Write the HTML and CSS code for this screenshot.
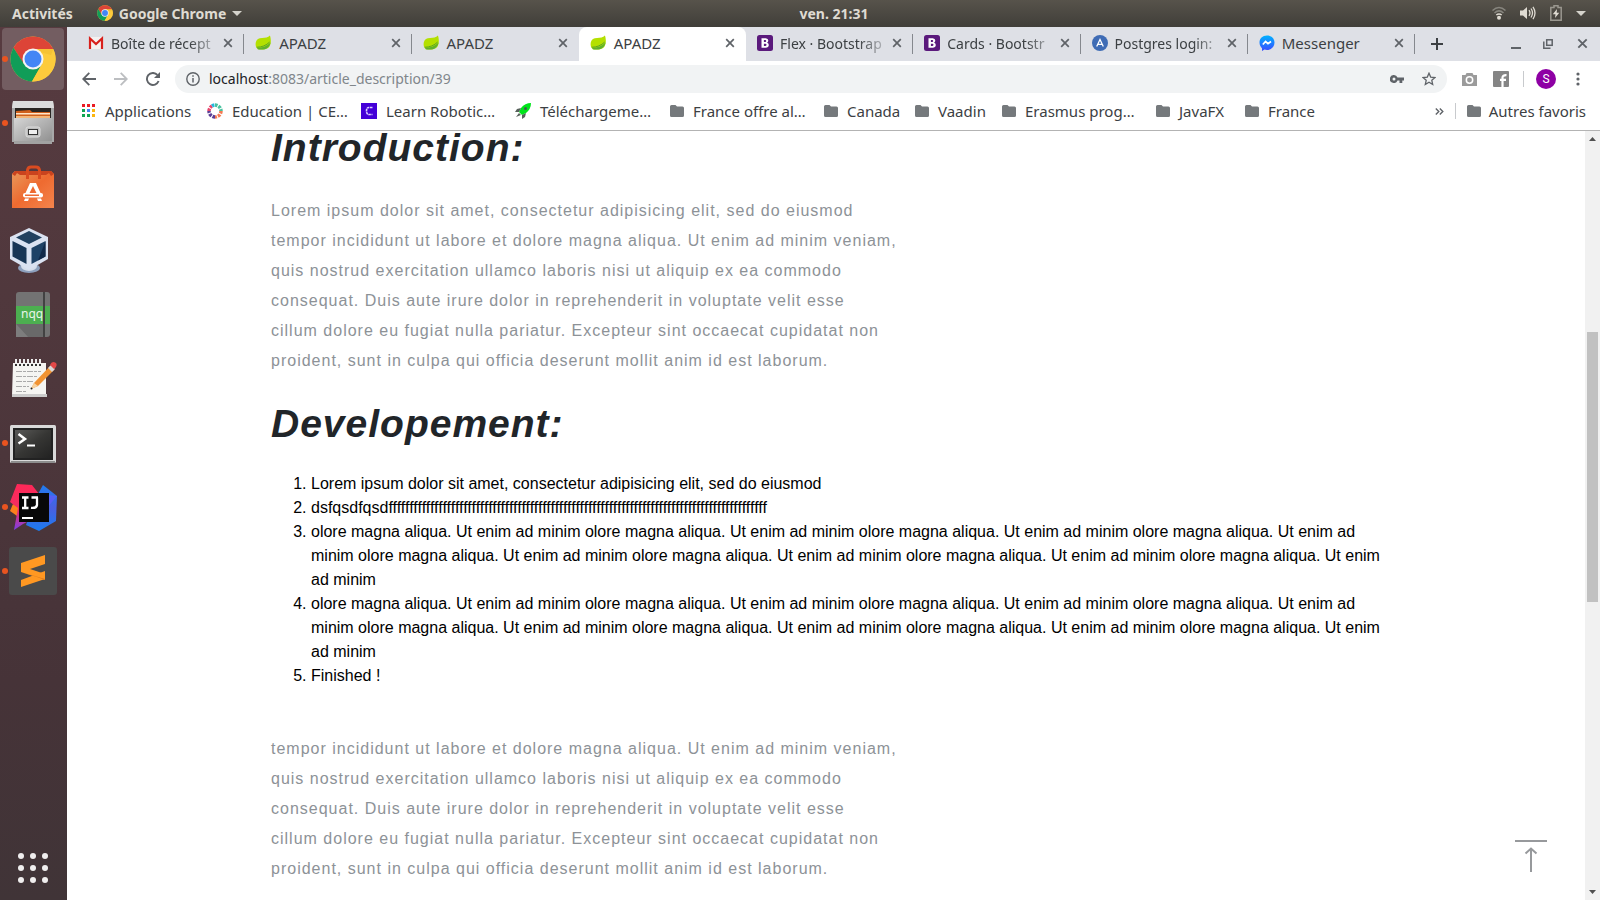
FILE: index.html
```html
<!DOCTYPE html>
<html lang="fr">
<head>
<meta charset="utf-8">
<title>APADZ</title>
<link rel="stylesheet" href="styles.css">
</head>
<body>
<svg class="defs" aria-hidden="true">
  <defs>
    <linearGradient id="ijp" x1="0" y1="0" x2="0" y2="1"><stop offset="0" stop-color="#fe2857"/><stop offset=".55" stop-color="#f22e62"/><stop offset="1" stop-color="#7a3fe8"/></linearGradient>
    <linearGradient id="ijb" x1="0" y1="0" x2="0" y2="1"><stop offset="0" stop-color="#1f7df0"/><stop offset=".5" stop-color="#4a5fe0"/><stop offset="1" stop-color="#1a7cf0"/></linearGradient>
    <linearGradient id="metal" x1="0" y1="0" x2="1" y2="1"><stop offset="0" stop-color="#d6d6d6"/><stop offset="1" stop-color="#8c8c8c"/></linearGradient>
    <linearGradient id="bag" x1="0" y1="0" x2="1" y2="1"><stop offset="0" stop-color="#e99a5c"/><stop offset=".5" stop-color="#ee6a30"/><stop offset="1" stop-color="#f4854d"/></linearGradient>
    <linearGradient id="term" x1="0" y1="0" x2="1" y2="1"><stop offset="0" stop-color="#5a5a58"/><stop offset=".5" stop-color="#363634"/><stop offset="1" stop-color="#222"/></linearGradient>
    <linearGradient id="msg" x1="0" y1="0" x2="0" y2="1"><stop offset="0" stop-color="#00b2ff"/><stop offset="1" stop-color="#3a4bff"/></linearGradient>
  </defs>
  <symbol id="chrome" viewBox="0 0 46 46">
    <circle cx="23" cy="23" r="22.500" fill="#fdcb3c"/>
    <path d="M3.500 11.800A22.500 22.500 0 0 1 42.500 11.800L43.300 13H23L13 27Z" fill="#dd4437"/>
    <path d="M3.500 11.800A22.500 22.500 0 0 0 22 45.500L32 28 23 30 14 28Z" fill="#109d58"/>
    <path d="M32 28L22 45.500A22.500 22.500 0 0 0 43.300 13H23Z" fill="#fdcb3c"/>
    <path d="M23 13H43.300L41 19 30 16Z" fill="#e8b226" opacity=".35"/>
    <circle cx="23" cy="23" r="10.500" fill="#f4f4f4"/><circle cx="23" cy="23" r="8.500" fill="#4386f5"/>
  </symbol>
  <symbol id="leaf" viewBox="0 0 18 18">
    <path d="M15.800 1C17.300 5.500 17.200 10.500 14.800 13.500 12.500 16 7 16.300 3 15.500 .8 14 .3 11 .8 8.500 1.500 5 4 3.700 7.500 3.600 11 3.500 13.800 3 15.800 1Z" fill="#b4e000"/>
    <path d="M2.500 14.300C8 14.300 13 12.200 16.500 8.500 15.800 12 13.800 14.800 10.500 15.500 7.500 16 4.500 15.900 3 15.500Z" fill="#5fb030"/>
    <path d="M1.800 13.500C7 13.600 12 11.500 15.500 8" fill="none" stroke="#4c9a2a" stroke-width=".9"/>
  </symbol>
  <symbol id="close" viewBox="0 0 10 10"><path d="M1.200 1.200l7.600 7.600M8.800 1.200L1.200 8.800" stroke="#5f6368" stroke-width="1.700"/></symbol>
  <symbol id="folder" viewBox="0 0 14 12"><path d="M1.500 0H5.500L7 1.500H12.500Q14 1.500 14 3V10.500Q14 12 12.500 12H1.500Q0 12 0 10.500V1.500Q0 0 1.500 0Z" fill="#75797c"/></symbol>
  <symbol id="boot" viewBox="0 0 16 16"><rect width="16" height="16" rx="2.500" fill="#5b1a7c"/><path d="M4.500 3.200H8.700Q11.300 3.400 11.300 5.600 11.300 7.100 10.100 7.700 11.800 8.200 11.800 10 11.600 12.700 8.700 12.800H4.500ZM6.900 5V7H8.300Q9.200 6.900 9.200 6 9.200 5.100 8.300 5ZM6.900 8.700V11H8.500Q9.500 10.900 9.500 9.800 9.400 8.800 8.500 8.700Z" fill="#fff" fill-rule="evenodd"/></symbol>
</svg>

<header class="panel">
  <div class="panel-left">
    <button class="panel-btn">Activités</button>
    <button class="panel-btn"><svg width="16" height="16"><use href="#chrome"/></svg>Google Chrome<svg class="caret" width="10" height="5" viewBox="0 0 10 5"><path d="M0 0H10L5 5Z" fill="#d5d3cc"/></svg></button>
  </div>
  <time class="clock">ven. 21:31</time>
  <div class="panel-right">
    <svg width="14" height="14" viewBox="0 0 14 14" fill="none"><path d="M.5 4.500Q7-1.500 13.500 4.500M2.500 7Q7 2.800 11.500 7" stroke="#87857e" stroke-width="1.500"/><path d="M4.300 9Q7 6.800 9.700 9" stroke="#dfdbd2" stroke-width="1.500"/><circle cx="7" cy="11.800" r="2" fill="#dfdbd2"/></svg>
    <svg width="16" height="14" viewBox="0 0 16 14" fill="none"><path d="M0 4.500H3L7 1V13L3 9.500H0Z" fill="#dfdbd2"/><path d="M9 4.200Q11 7 9 9.800M11 2.500Q14 7 11 11.500M13 .8Q17 7 13 13.200" stroke="#dfdbd2" stroke-width="1.300"/></svg>
    <svg width="12" height="16" viewBox="0 0 12 16" fill="none"><path d="M4 .8H8V2.500H11.200V15.200H.8V2.500H4Z" stroke="#9a978f" stroke-width="1.500"/><path d="M7 4L2.800 9.200H5.500L5 13 9.300 7.800H6.700Z" fill="#dfdbd2"/></svg>
    <svg width="10" height="5" viewBox="0 0 10 5"><path d="M0 0H10L5 5Z" fill="#d5d3cc"/></svg>
  </div>
</header>

<div class="desktop">
  <nav class="dock" aria-label="Applications">
    <button class="dock-item active running" aria-label="Google Chrome"><svg width="46" height="46"><use href="#chrome"/></svg></button>
    <button class="dock-item running" aria-label="Fichiers"><svg width="48" height="48" viewBox="0 0 48 48"><path d="M4 2H44L45 7V43H3V7Z" fill="#a8a8a8"/><path d="M4 2H44L45 9H3Z" fill="#dcdcdc"/><rect x="6" y="9" width="36" height="13" fill="#292522"/><path d="M7 12L21 11 23 13H41V20H7Z" fill="#d0601c"/><rect x="7" y="14" width="34" height="1.500" fill="#ffe5c8"/><rect x="7" y="17" width="34" height="4" fill="#f3b678"/><path d="M5 19H43V45H5Z" fill="url(#metal)"/><path d="M5 42H43V45H5Z" fill="#a2a2a2"/><rect x="17" y="28" width="14" height="10" rx="2" fill="#bdbdbd" stroke="#ddd"/><rect x="19.500" y="30.500" width="9" height="5" fill="#eee" stroke="#333"/></svg></button>
    <button class="dock-item" aria-label="Logiciels"><svg width="48" height="48" viewBox="0 0 48 48"><path d="M3 11L6 8H42L45 11V45H3Z" fill="url(#bag)"/><path d="M3 11L6 8H42L45 11 42 13 40 10 37 12H11L8 10 6 13Z" fill="#ca431e"/><path d="M18.500 16V7Q19 4 22 4H27Q30 4 30.500 7V16" fill="none" stroke="#d94b20" stroke-width="3"/><path d="M21 20H27L31.500 30H27.500L24 23 20.500 30H16.500ZM16 35.500H20L19 38H15ZM28 35.500H32L33 38H29Z" fill="#fff"/><rect x="14" y="30" width="20" height="4.500" rx="2" fill="#fff"/><rect x="16" y="31.500" width="14" height="1.500" fill="#ef6b32"/></svg></button>
    <button class="dock-item shifted" aria-label="VirtualBox"><svg width="40" height="48" viewBox="0 0 40 48"><ellipse cx="20" cy="41" rx="11" ry="5" fill="#8da0bd"/><ellipse cx="20" cy="39" rx="8" ry="5" fill="#d6deeb"/><path d="M20 1L39 10V32L20 43 1 32V10Z" fill="#dae2f1"/><path d="M20 4L33 10.500 20 17 7 10.500Z" fill="#20405f"/><path d="M3.500 14L17.500 21V37L3.500 29.500Z" fill="#173555"/><path d="M22.500 21L36.500 14V29.500L22.500 37Z" fill="#1e4266"/><path d="M36.500 14V29.500L29 33.500Z" fill="#10294a"/></svg></button>
    <button class="dock-item" aria-label="Notepadqq"><svg width="34" height="46" viewBox="0 0 34 46"><rect width="34" height="45" rx="3" fill="#737373"/><path d="M0 32H27V45H12Z" fill="#696969"/><path d="M0 32L12 45H0Z" fill="#7d7d7d"/><rect y="14" width="34" height="18" fill="#4caf50"/><rect x="27" width="2" height="45" fill="#424242"/><text class="nqq" x="5" y="26">nqq</text></svg></button>
    <button class="dock-item" aria-label="Éditeur de texte"><svg width="48" height="40" viewBox="0 0 48 40"><path d="M4 4H37V37H3Z" fill="#f5f5f2"/><path d="M3 35H38V38H3Z" fill="#ccc"/><path d="M7 4V7M11 4V7M15 4V7M19 4V7M23 4V7M27 4V7M31 4V7" stroke="#333" stroke-width="2"/><path d="M7 0V5M11 0V5M15 0V5M19 0V5M23 0V5M27 0V5M31 0V5" stroke="#eee" stroke-width="2"/><path d="M7 12.500H32M7 17.500H28M7 22.500H24M7 27.500H20M7 32.500H17" stroke="#aaa" stroke-dasharray="6 1 3 1"/><path d="M22 30L25 24 41 7 45 11 29 27Z" fill="#f19332"/><path d="M25 24L29 27 22 30Z" fill="#f7d3a0"/><path d="M39 9L42 6 46 10 43 13Z" fill="#d8d8d8"/><path d="M41 6Q43 1 47 4 49 7 45 10Z" fill="#e24848"/><circle cx="22.500" cy="29.500" r="1" fill="#222"/></svg></button>
    <button class="dock-item running" aria-label="Terminal"><svg width="46" height="42" viewBox="0 0 46 42"><rect y="3" width="46" height="38" rx="1.500" fill="#d9d9d9"/><rect x="1" y="39" width="44" height="2" fill="#8d8d8d"/><rect x="3" y="6" width="40" height="32" fill="#222"/><rect x="5" y="8" width="36" height="28" fill="url(#term)"/><path d="M8.500 12L15 17 8.500 21.500" fill="none" stroke="#fff" stroke-width="2.500"/><path d="M17 23.500H25" stroke="#fff" stroke-width="2"/></svg></button>
    <button class="dock-item running" aria-label="IntelliJ IDEA"><svg width="50" height="50" viewBox="0 0 50 50"><path d="M5 22L12 26V36L2 29Z" fill="#fc801d"/><path d="M9 2L24 3 31 12V34L15 42 6 48 10 26 2 20Z" fill="url(#ijp)"/><path d="M35 3L49 14 48 39 31 49 18 43 30 12Z" fill="url(#ijb)"/><path d="M49 14L39 26V13Z" fill="#6b57ff" opacity=".6"/><rect x="11" y="11" width="30" height="29" fill="#080808"/><path d="M14 15.500H20.500M17.200 15.500V26M14 26H20.500M23.500 15.500H30M29 15.500V23Q28.500 26.500 23 25.800" fill="none" stroke="#fff" stroke-width="2.300"/><rect x="14" y="35" width="11" height="2" fill="#fff"/></svg></button>
    <button class="dock-item running" aria-label="Sublime Text"><svg width="48" height="48" viewBox="0 0 48 48"><rect width="48" height="48" rx="3" fill="#4a4a4a"/><path d="M12 16L36 8V17L21 22 36 27V33L12 25Z" fill="#ff9822"/><path d="M12 33L36 24V32L12 40Z" fill="#ff9822"/><path d="M12 25L36 32V33L28 30Z" fill="#d9781c"/></svg></button>
    <button class="dock-item apps" aria-label="Afficher les applications"><svg width="30" height="30" viewBox="0 0 30 30" fill="#f0eeee"><circle cx="3" cy="3" r="3"/><circle cx="15" cy="3" r="3"/><circle cx="27" cy="3" r="3"/><circle cx="3" cy="15" r="3"/><circle cx="15" cy="15" r="3"/><circle cx="27" cy="15" r="3"/><circle cx="3" cy="27" r="3"/><circle cx="15" cy="27" r="3"/><circle cx="27" cy="27" r="3"/></svg></button>
  </nav>

  <div class="browser">
    <div class="tabstrip">
      <div class="tabs">
        <div class="tab long"><svg width="16" height="16" viewBox="0 0 16 16"><rect x="1" y="2" width="14" height="12" fill="#f4f1f1"/><path d="M2 14V3.500L8 9 14 3.500V14" fill="none" stroke="#d8201c" stroke-width="2.200"/></svg><a href="#">Boîte de récept</a><button aria-label="Fermer"><svg width="10" height="10"><use href="#close"/></svg></button></div>
        <div class="tab"><svg width="17" height="18"><use href="#leaf"/></svg><a href="#">APADZ</a><button aria-label="Fermer"><svg width="10" height="10"><use href="#close"/></svg></button></div>
        <div class="tab last"><svg width="17" height="18"><use href="#leaf"/></svg><a href="#">APADZ</a><button aria-label="Fermer"><svg width="10" height="10"><use href="#close"/></svg></button></div>
        <div class="tab current"><svg width="17" height="18"><use href="#leaf"/></svg><a href="#">APADZ</a><button aria-label="Fermer"><svg width="10" height="10"><use href="#close"/></svg></button></div>
        <div class="tab long"><svg width="16" height="16"><use href="#boot"/></svg><a href="#">Flex · Bootstrap</a><button aria-label="Fermer"><svg width="10" height="10"><use href="#close"/></svg></button></div>
        <div class="tab long"><svg width="16" height="16"><use href="#boot"/></svg><a href="#">Cards · Bootstr</a><button aria-label="Fermer"><svg width="10" height="10"><use href="#close"/></svg></button></div>
        <div class="tab long"><svg width="16" height="16" viewBox="0 0 16 16"><circle cx="8" cy="8" r="8" fill="#3f6cb5"/><path d="M4.700 11.500L8 4.500 11.300 11.500M6 9.300H10" fill="none" stroke="#fff" stroke-width="1.300"/></svg><a href="#">Postgres login:</a><button aria-label="Fermer"><svg width="10" height="10"><use href="#close"/></svg></button></div>
        <div class="tab"><svg width="16" height="16" viewBox="0 0 16 16"><path d="M8 .5C3.500 .5 .5 3.500 .5 7.600 .5 10 1.500 12 3 13.300V16L5.500 14.600C10.500 16 15.500 13 15.500 7.600 15.500 3.500 12.500 .5 8 .5Z" fill="url(#msg)"/><path d="M3.800 9.500L6.600 6.500 9 8.600 12 6.500" fill="none" stroke="#fff" stroke-width="1.700"/></svg><a href="#">Messenger</a><button aria-label="Fermer"><svg width="10" height="10"><use href="#close"/></svg></button></div>
      </div>
      <div class="window-controls">
        <button aria-label="Nouvel onglet"><svg width="12" height="12" viewBox="0 0 12 12"><path d="M6 0V12M0 6H12" stroke="#3c4043" stroke-width="2"/></svg></button>
        <button class="minimize" aria-label="Réduire"><svg width="10" height="10" viewBox="0 0 10 10"><path d="M0 9H10" stroke="#5f6368" stroke-width="2"/></svg></button>
        <button aria-label="Restaurer"><svg width="10" height="10" viewBox="0 0 10 10" fill="none" stroke="#5f6368" stroke-width="1.500"><rect x="3.700" y=".8" width="5.500" height="5.500"/><path d="M.8 2.500V9.200H7.500"/></svg></button>
        <button aria-label="Fermer la fenêtre"><svg width="11" height="11"><use href="#close"/></svg></button>
      </div>
    </div>

    <div class="toolbar">
      <button aria-label="Retour"><svg width="14" height="14" viewBox="0 0 14 14" fill="none" stroke="#5f6368" stroke-width="1.800"><path d="M14 7H1.500M7.300 .8L1.200 7 7.300 13.200"/></svg></button>
      <button aria-label="Avancer"><svg width="14" height="14" viewBox="0 0 14 14" fill="none" stroke="#bcbec1" stroke-width="1.800"><path d="M0 7H12.500M6.700 .8L12.800 7 6.700 13.200"/></svg></button>
      <button aria-label="Actualiser"><svg width="14" height="14" viewBox="0 0 14 14"><path d="M12.600 9A6 6 0 1 1 11.400 2.900" fill="none" stroke="#5f6368" stroke-width="1.900"/><path d="M14 0V6H8Z" fill="#5f6368"/></svg></button>
      <div class="omnibox">
        <svg width="14" height="14" viewBox="0 0 14 14"><circle cx="7" cy="7" r="6.200" fill="none" stroke="#5f6368" stroke-width="1.400"/><path d="M7 6V10.500M7 3.300V4.800" stroke="#5f6368" stroke-width="1.500"/></svg>
        <div class="url" role="textbox" aria-label="Adresse" tabindex="0"><span>localhost</span>:8083/article_description/39</div>
        <button aria-label="Mots de passe"><svg width="14" height="8" viewBox="0 0 14 8"><path d="M4 0A4 4 0 1 0 7.500 5.500H9.500V8H12.300V5.500H14V2.500H7.500A4 4 0 0 0 4 0ZM4 2.500A1.500 1.500 0 1 1 4 5.500 1.500 1.500 0 1 1 4 2.500Z" fill="#5f6368" fill-rule="evenodd"/></svg></button>
        <button aria-label="Ajouter aux favoris"><svg width="14" height="14" viewBox="0 0 14 14"><path d="M7 1.200L8.700 5.100 13 5.500 9.800 8.300 10.700 12.500 7 10.300 3.300 12.500 4.200 8.300 1 5.500 5.300 5.100Z" fill="none" stroke="#5f6368" stroke-width="1.300"/></svg></button>
      </div>
      <button aria-label="Capture"><svg width="15" height="13" viewBox="0 0 15 13"><path d="M4.500 0H10.500L11.500 2H15V13H0V2H3.500Z" fill="#9b9b9b"/><circle cx="7.500" cy="7" r="3.200" fill="none" stroke="#fff" stroke-width="1.500"/></svg></button>
      <button aria-label="Facebook"><svg width="16" height="16" viewBox="0 0 16 16"><rect width="16" height="16" rx="1" fill="#858585"/><path d="M9.500 16V6.500Q9.500 4 13.500 4.200M7 8.800H13" fill="none" stroke="#fff" stroke-width="2.200"/></svg></button>
      <span class="rule"></span>
      <button class="avatar" aria-label="Profil">S</button>
      <button aria-label="Menu"><svg width="4" height="14" viewBox="0 0 4 14" fill="#5f6368"><circle cx="2" cy="2" r="1.600"/><circle cx="2" cy="7" r="1.600"/><circle cx="2" cy="12" r="1.600"/></svg></button>
    </div>

    <div class="bookmarks">
      <div class="bookmark-list">
        <a href="#"><svg width="14" height="14" viewBox="0 0 14 14"><path d="M0 0H3V3H0ZM5 0H8V3H5ZM10 0H13V3H10Z" fill="#ea1c24"/><path d="M0 5H3V8H0ZM0 10H3V13H0Z" fill="#10a552"/><path d="M5 5H8V8H5Z" fill="#4285f4"/><path d="M5 10H8V13H5Z" fill="#10a552"/><path d="M10 5H13V8H10ZM10 10H13V13H10Z" fill="#fbb50f"/></svg>Applications</a>
        <a href="#"><svg width="16" height="16" viewBox="0 0 16 16" fill="none" stroke-width="3.500" stroke-dasharray="2.600 1"><path d="M8 2A6 6 0 0 1 14 8" stroke="#48c3a0"/><path d="M14 8A6 6 0 0 1 8 14" stroke="#f47b53"/><path d="M8 14A6 6 0 0 1 2 8" stroke="#5b3f96"/><path d="M2 8A6 6 0 0 1 5 3" stroke="#e8466c"/><path d="M5 3A6 6 0 0 1 8 2" stroke="#25b8e0"/></svg>Education | CE…</a>
        <a href="#"><svg width="16" height="16" viewBox="0 0 16 16"><rect width="16" height="16" fill="#4400d8"/><path d="M11.500 4.500H8Q5.500 4.500 5.500 8T8 11.500H11.500" fill="none" stroke="#dcd0ff" stroke-width="1.600" stroke-dasharray="2.500 .6"/></svg>Learn Robotic…</a>
        <a href="#"><svg width="16" height="16" viewBox="0 0 16 16"><path d="M16 0Q10 0 6 5L4 9 7 12 11 10Q16 6 16 0Z" fill="#00e51b"/><path d="M6 5L2 6 0 9 4 9ZM11 10L10 14 7 16 7 12ZM4 10L1 14 6 12Z" fill="#57605b"/><circle cx="10.500" cy="5.500" r="1.500" fill="#3f6050"/></svg>Téléchargeme…</a>
        <a href="#"><svg width="14" height="12"><use href="#folder"/></svg>France offre al…</a>
        <a href="#"><svg width="14" height="12"><use href="#folder"/></svg>Canada</a>
        <a href="#"><svg width="14" height="12"><use href="#folder"/></svg>Vaadin</a>
        <a href="#"><svg width="14" height="12"><use href="#folder"/></svg>Erasmus prog…</a>
        <a href="#"><svg width="14" height="12"><use href="#folder"/></svg>JavaFX</a>
        <a href="#"><svg width="14" height="12"><use href="#folder"/></svg>France</a>
      </div>
      <div class="bookmark-more">
        <button aria-label="Plus de favoris"><svg width="9" height="7" viewBox="0 0 9 7" fill="none" stroke="#5f6368" stroke-width="1.400"><path d="M.8 .5L3.800 3.500 .8 6.500M4.800 .5L7.800 3.500 4.800 6.500"/></svg></button>
        <span class="rule"></span>
        <a href="#"><svg width="14" height="12"><use href="#folder"/></svg>Autres favoris</a>
      </div>
    </div>

    <div class="viewport">
      <main class="page">
        <article class="article">
          <h1>Introduction:</h1>
          <p>Lorem ipsum dolor sit amet, consectetur adipisicing elit, sed do eiusmod<br>tempor incididunt ut labore et dolore magna aliqua. Ut enim ad minim veniam,<br>quis nostrud exercitation ullamco laboris nisi ut aliquip ex ea commodo<br>consequat. Duis aute irure dolor in reprehenderit in voluptate velit esse<br>cillum dolore eu fugiat nulla pariatur. Excepteur sint occaecat cupidatat non<br>proident, sunt in culpa qui officia deserunt mollit anim id est laborum.</p>
          <h1>Developement:</h1>
          <ol>
            <li>Lorem ipsum dolor sit amet, consectetur adipisicing elit, sed do eiusmod</li>
            <li>dsfqsdfqsdfffffffffffffffffffffffffffffffffffffffffffffffffffffffffffffffffffffffffffffffffffffffffff</li>
            <li>olore magna aliqua. Ut enim ad minim olore magna aliqua. Ut enim ad minim olore magna aliqua. Ut enim ad minim olore magna aliqua. Ut enim ad minim olore magna aliqua. Ut enim ad minim olore magna aliqua. Ut enim ad minim olore magna aliqua. Ut enim ad minim olore magna aliqua. Ut enim ad minim</li>
            <li>olore magna aliqua. Ut enim ad minim olore magna aliqua. Ut enim ad minim olore magna aliqua. Ut enim ad minim olore magna aliqua. Ut enim ad minim olore magna aliqua. Ut enim ad minim olore magna aliqua. Ut enim ad minim olore magna aliqua. Ut enim ad minim olore magna aliqua. Ut enim ad minim</li>
            <li>Finished !</li>
          </ol>
          <p>tempor incididunt ut labore et dolore magna aliqua. Ut enim ad minim veniam,<br>quis nostrud exercitation ullamco laboris nisi ut aliquip ex ea commodo<br>consequat. Duis aute irure dolor in reprehenderit in voluptate velit esse<br>cillum dolore eu fugiat nulla pariatur. Excepteur sint occaecat cupidatat non<br>proident, sunt in culpa qui officia deserunt mollit anim id est laborum.</p>
        </article>
        <button class="to-top" aria-label="Haut de page"><svg width="32" height="32" viewBox="0 0 32 32" fill="none" stroke="#97999c" stroke-width="2"><path d="M0 1H32M16 32V9M10.500 13.500L16 8.500 21.500 13.500"/></svg></button>
      </main>
      <div class="scrollbar" aria-hidden="true">
        <svg width="7" height="4" viewBox="0 0 7 4"><path d="M0 4L3.500 0 7 4Z" fill="#505050"/></svg>
        <div class="track"><div class="thumb"></div></div>
        <svg width="7" height="4" viewBox="0 0 7 4"><path d="M0 0L3.500 4 7 0Z" fill="#505050"/></svg>
      </div>
    </div>
  </div>
</div>
</body>
</html>
```
FILE: styles.css
```css
* { box-sizing: border-box; }

body {
  margin: 0;
  height: 100vh;
  display: flex;
  flex-direction: column;
  overflow: hidden;
  background: #fff;
  font-family: "Noto Sans", "Open Sans", sans-serif;
  font-size: 15px;
  color: #3c4043;
}

button {
  display: flex;
  align-items: center;
  justify-content: center;
  padding: 0;
  border: 0;
  background: none;
  font: inherit;
  color: inherit;
}

a { color: inherit; text-decoration: none; }
svg { display: block; flex: none; }
.defs { position: absolute; width: 0; height: 0; }

/* Desktop panel */
.panel {
  flex: none;
  display: grid;
  grid-template-columns: 1fr auto 1fr;
  align-items: center;
  height: 27px;
  padding: 0 12px 1px;
  background: linear-gradient(#57534b, #403e39);
  color: #dfdbd2;
  font-size: 14px;
  font-weight: 700;
}
.panel-left { display: flex; gap: 24px; min-width: 0; }
.panel-btn { gap: 6px; }
.clock { padding-left: 68px; }
.panel-right {
  display: flex;
  align-items: center;
  justify-content: flex-end;
  gap: 14px;
  min-width: 0;
  padding-right: 2px;
}

.desktop { flex: 1; display: flex; min-height: 0; }

/* Dock */
.dock {
  flex: none;
  width: 67px;
  display: flex;
  flex-direction: column;
  gap: 2px;
  padding: 1px 2px;
  background: linear-gradient(#573b40, #4e373c 40%, #463338 75%, #403437);
}
.dock-item {
  position: relative;
  width: 62px;
  height: 62px;
  border-radius: 4px;
}
.dock-item.active { background: #735d61; }
.dock-item.running::before {
  content: "";
  position: absolute;
  left: 0;
  top: 28px;
  width: 6px;
  height: 6px;
  border-radius: 50%;
  background: #e95420;
}
.dock-item.shifted { padding-right: 8px; }
.dock-item.apps { margin-top: auto; }
.nqq { font: 12px "Noto Sans", sans-serif; fill: #e8f5e9; }

/* Browser chrome */
.browser { flex: 1; min-width: 0; display: flex; flex-direction: column; }
.tabstrip {
  flex: none;
  display: flex;
  height: 34px;
  padding-left: 10px;
  background: #dee0e6;
}
.tabs { flex: 1; min-width: 0; display: grid; grid-template-columns: repeat(8, minmax(0, 1fr)); }
.tab {
  position: relative;
  display: flex;
  align-items: center;
  padding: 0 11px 2px 11px;
}
.tab::after {
  content: "";
  position: absolute;
  right: 0;
  top: 7px;
  width: 1px;
  height: 20px;
  background: #85888e;
}
.tab.last::after, .tab.current::after { display: none; }
.tab.current { background: #fff; border-radius: 8px 8px 0 0; }
.tab a { flex: 1; min-width: 0; margin-left: 7px; white-space: nowrap; }
.tab.long a {
  font-size: 14px;
  -webkit-mask-image: linear-gradient(to right, #000 70%, transparent);
  mask-image: linear-gradient(to right, #000 70%, transparent);
}
.tab button { width: 10px; height: 20px; }
.window-controls {
  flex: none;
  display: grid;
  grid-template-columns: 44px 1fr 32px 36px;
  width: 185px;
  align-items: center;
  padding-bottom: 1px;
}
.window-controls .minimize { justify-content: flex-end; padding-right: 11px; }

.toolbar {
  flex: none;
  display: flex;
  align-items: center;
  height: 33px;
  padding: 4px 20px 1px 15px;
}
.toolbar > button:nth-child(-n+3) { width: 14px; margin-right: 18px; }
.toolbar > button:nth-child(3) { margin-right: 15px; }
.omnibox {
  flex: 1;
  display: flex;
  align-items: center;
  height: 28px;
  margin-right: 15px;
  padding: 0 11px;
  border-radius: 14px;
  background: #f1f3f4;
}
.url {
  flex: 1;
  margin-left: 9px;
  padding-bottom: 1px;
  font-size: 14px;
  color: #80868b;
  white-space: nowrap;
}
.url span { color: #202124; }
.omnibox button { margin-left: 18px; }
.omnibox + button { margin-right: 16px; }
.rule { width: 1px; height: 16px; background: #c8cacd; }
.toolbar .rule { margin: 0 12px 0 14px; }
.toolbar .avatar {
  width: 20px;
  height: 20px;
  margin-right: 20px;
  border-radius: 50%;
  background: #8e00a4;
  color: #fff;
  font-family: Roboto, sans-serif;
  font-size: 12px;
}

.bookmarks {
  flex: none;
  display: flex;
  align-items: center;
  justify-content: space-between;
  height: 37px;
  padding: 0 14px 2px 15px;
  border-bottom: 1px solid #b3b3b3;
}
.bookmark-list {
  display: grid;
  grid-template-columns: 125px 154px 154px 155px 154px 91px 87px 154px 89px auto;
}
.bookmarks a { display: flex; align-items: center; gap: 9px; white-space: nowrap; }
.bookmark-more { display: flex; align-items: center; gap: 11px; }
.bookmark-more a { gap: 8px; }

/* Page */
.viewport { flex: 1; min-height: 0; display: flex; background: #fff; }
.page { position: relative; flex: 1; min-width: 0; overflow: hidden; }
.article {
  max-width: 1110px;
  margin: 0 auto;
  padding-top: 1px;
  font-family: "Liberation Sans", Arial, sans-serif;
  font-size: 16px;
}
.article h1 {
  margin: 0 0 32px;
  font-size: 39px;
  line-height: 32px;
  font-style: italic;
  font-weight: 700;
  letter-spacing: 1px;
  color: #212529;
}
.article p {
  margin: 0 0 32px;
  line-height: 30px;
  letter-spacing: 1px;
  color: #8d9297;
}
.article ol {
  margin: 0 0 46px;
  padding-left: 40px;
  line-height: 24px;
  color: #000;
}
.to-top { position: absolute; right: 38px; bottom: 28px; }

/* Scrollbar */
.scrollbar {
  flex: none;
  width: 15px;
  display: flex;
  flex-direction: column;
  align-items: center;
  padding: 6px 0;
  background: #f1f1f1;
}
.track { flex: 1; display: grid; grid-template-rows: 51fr 72fr 77fr; align-self: stretch; padding: 0 2px; }
.thumb { grid-row: 2; background: #c1c1c1; }
```
